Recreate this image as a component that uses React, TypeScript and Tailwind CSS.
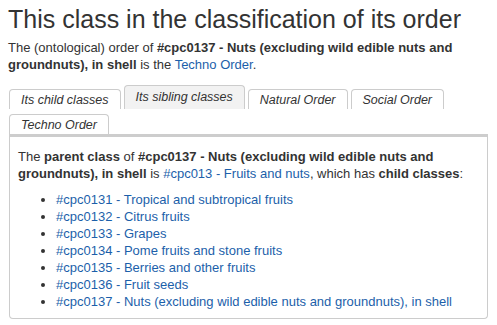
import React from "react";

const TABS = [
  { label: "Its child classes", active: false },
  { label: "Its sibling classes", active: true },
  { label: "Natural Order", active: false },
  { label: "Social Order", active: false },
  { label: "Techno Order", active: false },
];

const CHILDREN = [
  "#cpc0131 - Tropical and subtropical fruits",
  "#cpc0132 - Citrus fruits",
  "#cpc0133 - Grapes",
  "#cpc0134 - Pome fruits and stone fruits",
  "#cpc0135 - Berries and other fruits",
  "#cpc0136 - Fruit seeds",
  "#cpc0137 - Nuts (excluding wild edible nuts and groundnuts), in shell",
];

export default function App() {
  return (
    <div className="w-[497px] h-[325px] overflow-hidden bg-white px-2 text-[13px] leading-[17px] text-[#333] font-['Liberation_Sans',Arial,sans-serif]">
      <h1 className="pt-[4px] text-[25px] leading-[30px] font-normal text-[#333]">
        This class in the classification of its order
      </h1>

      <p className="mt-[5px]">
        The (ontological) order of{" "}
        <b>#cpc0137 - Nuts (excluding wild edible nuts and groundnuts), in shell</b> is the{" "}
        <a className="text-[#1c5faa]">Techno Order</a>.
      </p>

      {/* Tabs */}
      <div className="mt-[12px] flex flex-wrap items-end gap-x-[3px] gap-y-[5px] pl-[1px] text-[12.5px]">
        {TABS.map((t) => (
          <div
            key={t.label}
            className={
              t.active
                ? "h-[24px] rounded-t-[4px] border border-b-0 border-[#ccc] bg-[#f2f2f2] px-[11px] pt-[2px] italic leading-[18px]"
                : "h-[20px] rounded-t-[4px] border border-b-0 border-[#ccc] bg-white px-[11px] pt-[1px] italic leading-[18px]"
            }
          >
            {t.label}
          </div>
        ))}
      </div>

      {/* Panel */}
      <div className="ml-[1px] mr-[1px] h-[185px] rounded-b-[4px] border border-t-[3px] border-[#ccc] border-t-[#cdcdcd] px-[8px] pt-[11px]">
        <p>
          The <b>parent class</b> of{" "}
          <b>#cpc0137 - Nuts (excluding wild edible nuts and groundnuts), in shell</b> is{" "}
          <a className="text-[#1c5faa]">#cpc013 - Fruits and nuts</a>, which has{" "}
          <b>child classes</b>:
        </p>
        <ul className="mt-[9px] list-disc pl-[38px]">
          {CHILDREN.map((c) => (
            <li key={c} className="marker:text-[#333]">
              <a className="text-[#1c5faa]">{c}</a>
            </li>
          ))}
        </ul>
      </div>
    </div>
  );
}
